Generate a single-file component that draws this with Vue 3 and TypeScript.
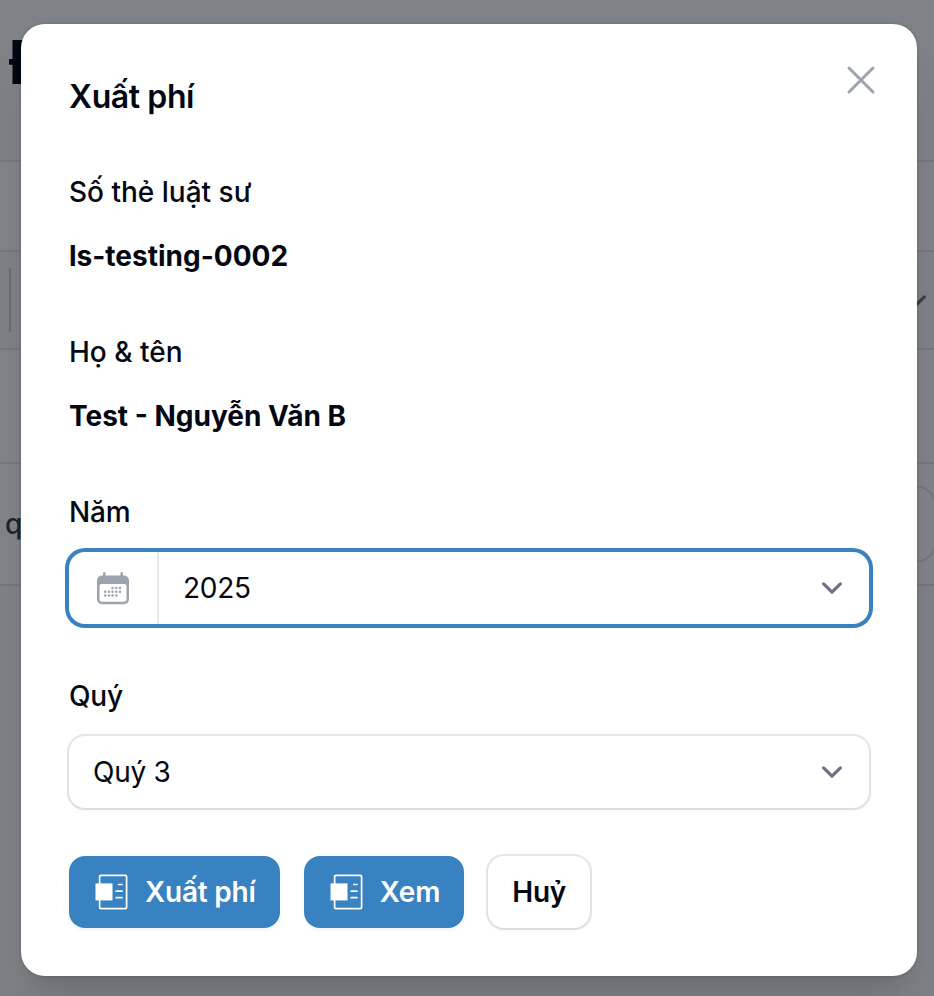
<script setup lang="ts">
import { ref } from 'vue'

interface Detail {
  label: string
  value: string
}

const details: Detail[] = [
  { label: 'Số thẻ luật sư', value: 'ls-testing-0002' },
  { label: 'Họ & tên', value: 'Test - Nguyễn Văn B' },
]
const actions: string[] = ['Xuất phí', 'Xem']
const year = ref('2025')
const quarter = ref('Quý 3')

const dots: [number, number][] = [
  [19.5, 20], [23.3, 20], [27, 20],
  [12.2, 23.8], [16, 23.8], [19.5, 23.8], [23.3, 23.8], [27, 23.8],
  [12.2, 27.4], [16, 27.4], [19.5, 27.4], [23.3, 27.4],
]
</script>

<template>
  <div class="screen">
    <div class="page">
      <header class="page-head">Đ</header>
      <div class="row row-tools"></div>
      <div class="row row-filter">
        <span class="divider"></span>
        <svg class="row-chevron" viewBox="0 0 20 20"><path d="M6 8l4 4 4-4" /></svg>
      </div>
      <div class="row row-columns"></div>
      <div class="row row-footer">
        <span>q</span>
        <span class="pager"></span>
      </div>
    </div>

    <div class="overlay">
      <section class="modal" role="dialog">
        <button class="close" type="button">
          <svg viewBox="0 0 24 24"><path d="M6 18 18 6M6 6l12 12" /></svg>
        </button>
        <h2>{{ actions[0] }}</h2>

        <dl>
          <div v-for="d in details" :key="d.label" class="detail">
            <dt>{{ d.label }}</dt>
            <dd>{{ d.value }}</dd>
          </div>
        </dl>

        <div class="field">
          <span class="label">Năm</span>
          <div class="select focused">
            <span class="prefix">
              <svg viewBox="0 0 40 40">
                <path class="cal-frame" fill-rule="evenodd" d="M9 7.5h22a5 5 0 0 1 5 5v18.7a5 5 0 0 1-5 5H9a5 5 0 0 1-5-5V12.500a5 5 0 0 1 5-5ZM8.500 16a2 2 0 0 0-2 2v13a2.800 2.800 0 0 0 2.800 2.800h21.400a2.800 2.800 0 0 0 2.800-2.800V18a2 2 0 0 0-2-2Z" />
                <path class="cal-ring" d="M11.300 5.200v4M28.700 5.200v4" />
                <circle v-for="(p, i) in dots" :key="i" :cx="p[0]" :cy="p[1]" r="1.25" />
              </svg>
            </span>
            <span class="value">{{ year }}</span>
            <svg class="chevron" viewBox="0 0 20 20"><path d="M6 8l4 4 4-4" /></svg>
          </div>
        </div>

        <div class="field">
          <span class="label">Quý</span>
          <div class="select">
            <span class="value">{{ quarter }}</span>
            <svg class="chevron" viewBox="0 0 20 20"><path d="M6 8l4 4 4-4" /></svg>
          </div>
        </div>

        <footer>
          <button v-for="a in actions" :key="a" class="btn primary" type="button">
            <svg viewBox="0 0 40 40">
              <rect class="doc" x="6.600" y="3.300" width="27" height="33.400" rx="1.500" />
              <rect class="block" x="2.500" y="11.400" width="17" height="17" />
              <path class="doc" d="M25.800 12.500h3.200M23.200 19.200h5.800M23.200 25.700h5.800" />
            </svg>
            <span>{{ a }}</span>
          </button>
          <button class="btn plain" type="button"><span>Huỷ</span></button>
        </footer>
      </section>
    </div>
  </div>
</template>

<style>
body {
  margin: 0;
  overflow: hidden;
}
</style>

<style scoped>
.screen {
  position: relative;
  width: 934px;
  height: 996px;
  overflow: hidden;
  font-family: Inter, 'Liberation Sans', sans-serif;
  font-size: 28px;
  line-height: 48px;
  color: #030712;
  box-sizing: border-box;
}
.screen * {
  box-sizing: border-box;
}
.page {
  height: 100%;
  background: #f9fafb;
}
.page-head {
  height: 160px;
  padding: 26px 0 0 8.5px;
  font-size: 60px;
  line-height: 72px;
  font-weight: 700;
}
.row {
  display: flex;
  align-items: center;
  justify-content: space-between;
  border-top: 2px solid #e5e7eb;
  background: #fff;
}
.row-tools {
  height: 90px;
}
.row-filter {
  height: 98px;
  padding: 0 0 0 9px;
  background: #f9fafb;
}
.divider {
  width: 2px;
  height: 64px;
  background: #d1d5db;
}
.row-chevron {
  width: 42px;
  height: 42px;
  margin: 2px -3px 0 0;
}
.row-columns {
  height: 114px;
}
.row-footer {
  height: 124px;
  padding-left: 5px;
  border-bottom: 2px solid #e5e7eb;
  font-weight: 500;
  color: #374151;
}
.pager {
  width: 80px;
  height: 76px;
  margin-right: -2px;
  border: 2px solid #e2e3e5;
  border-radius: 18px;
}
.overlay {
  position: absolute;
  inset: 0;
  padding: 24px 17px 20px 21px;
  background: rgba(3, 7, 18, 0.5);
}
.modal {
  position: relative;
  width: 896px;
  height: 952px;
  padding: 48px;
  border-radius: 24px;
  background: #fff;
  box-shadow: 0 0 0 2px rgba(3, 7, 18, 0.05), 0 40px 50px -10px rgba(0, 0, 0, 0.1),
    0 16px 20px -12px rgba(0, 0, 0, 0.1);
}
.close {
  position: absolute;
  top: 32px;
  right: 32px;
  width: 48px;
  height: 48px;
  padding: 0;
  border: 0;
  background: none;
}
.close svg {
  display: block;
}
.close path {
  fill: none;
  stroke: #9ca3af;
  stroke-width: 1.5;
  stroke-linecap: round;
}
h2 {
  margin: 0 0 47px;
  padding-top: 1px;
  font-size: 32px;
  font-weight: 600;
  letter-spacing: -0.4px;
}
dl,
dd {
  margin: 0;
}
.detail {
  display: flex;
  flex-direction: column;
  gap: 16px;
  margin-bottom: 48px;
}
dt,
.label {
  font-weight: 500;
}
.label {
  letter-spacing: -0.2px;
}
dd {
  font-weight: 700;
}
.field {
  display: flex;
  flex-direction: column;
  gap: 16px;
  margin-bottom: 48px;
}
.select {
  display: flex;
  align-items: center;
  height: 72px;
  padding-right: 16px;
  border-radius: 16px;
  box-shadow: 0 0 0 2px rgba(3, 7, 18, 0.1), 0 2px 4px rgba(0, 0, 0, 0.05);
}
.focused {
  box-shadow: 0 0 0 4px #3982c1;
}
.prefix {
  display: flex;
  align-items: center;
  height: 100%;
  padding: 0 24px;
  border-right: 2px solid #e5e7eb;
}
.prefix svg {
  width: 40px;
  height: 40px;
  fill: #9ca3af;
}
.cal-ring {
  stroke: #9ca3af;
  stroke-width: 2.4;
  stroke-linecap: round;
}
.value {
  flex: 1;
  padding-left: 24px;
  letter-spacing: -0.25px;
}
.chevron {
  width: 42px;
  height: 42px;
}
.chevron path,
.row-chevron path {
  fill: none;
  stroke: #6b7280;
  stroke-width: 1.5;
  stroke-linecap: round;
  stroke-linejoin: round;
}
footer {
  display: flex;
  gap: 24px;
}
.btn {
  display: flex;
  align-items: center;
  gap: 12px;
  height: 72px;
  padding: 0 24px;
  border: 0;
  border-radius: 16px;
  font: 600 28px/48px Inter, 'Liberation Sans', sans-serif;
  letter-spacing: -0.2px;
}
.primary {
  color: #fff;
  background: #3982c1;
  box-shadow: 0 2px 4px rgba(0, 0, 0, 0.05);
}
.primary svg {
  width: 40px;
  height: 40px;
  overflow: visible;
}
.plain {
  color: #030712;
  background: #fff;
  box-shadow: 0 0 0 2px rgba(3, 7, 18, 0.1), 0 2px 4px rgba(0, 0, 0, 0.05);
}
.doc {
  fill: none;
  stroke: #fff;
  stroke-width: 1.7;
  stroke-linecap: round;
}
.block {
  fill: #fff;
}
</style>
